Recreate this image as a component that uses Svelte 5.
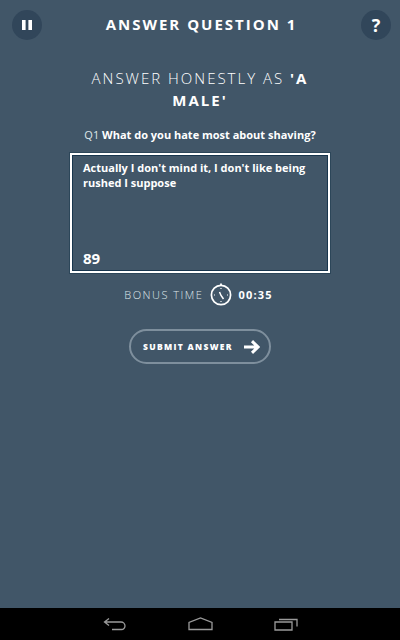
<script>
  let answer = "Actually I don't mind it, I don't like being rushed I suppose";
  let remaining = 89;
</script>

<div class="screen">
  <main>
    <header>
      <button class="round" aria-label="Pause">
        <svg width="10" height="12" viewBox="0 0 10 12"><path d="M0 1h3.6v10H0zM6.4 1H10v10H6.4z" fill="#fff" /></svg>
      </button>
      <h1>ANSWER QUESTION 1</h1>
      <button class="round help">?</button>
    </header>

    <h2>ANSWER HONESTLY AS <b>'A MALE'</b></h2>

    <p class="question">Q1 <b>What do you hate most about shaving?</b></p>

    <div class="answer">
      <div class="text">{answer}</div>
      <div class="count">{remaining}</div>
    </div>

    <div class="bonus">
      <span class="label">BONUS TIME</span>
      <svg width="22" height="24" viewBox="0 0 22 24" fill="none" stroke="#fff">
        <path d="M11 1.500v2" stroke-width="1.800" />
        <circle cx="11" cy="13" r="9.600" stroke-width="1.700" />
        <path d="M11 6v1M11 19v1M4 13h1M17 13h1" stroke-width="1.200" />
        <path d="M9.500 10L11 13.500l2.500 3.500" stroke-width="1.500" />
      </svg>
      <b>00:35</b>
    </div>

    <button class="submit">
      <span>SUBMIT ANSWER</span>
      <svg width="16" height="14" viewBox="0 0 16 14" fill="none" stroke="#fff" stroke-width="3">
        <path d="M0 7h13M8 1.200L14 7l-6 5.800" />
      </svg>
    </button>
  </main>

  <nav>
    <svg width="24" height="14" viewBox="0 0 24 14" fill="none" stroke="#9a9a9a" stroke-width="1.300">
      <path d="M6 1.500L1.500 5 6 8.500M1.500 5H18a4 4 0 0 1 4 4v0a3.500 3.500 0 0 1-3.500 3.500H9" />
    </svg>
    <svg width="25" height="14" viewBox="0 0 25 14" fill="none" stroke="#9a9a9a" stroke-width="1.300">
      <path d="M1 12.500V5.500L12.500 1 24 5.500v7z" />
    </svg>
    <svg width="24" height="14" viewBox="0 0 24 14" fill="none" stroke="#9a9a9a" stroke-width="1.300">
      <path d="M1 5h17v8H1zM5 2.500h18v7" />
    </svg>
  </nav>
</div>

<style>
  :global(body) {
    margin: 0;
  }

  .screen {
    width: 400px;
    height: 640px;
    display: flex;
    flex-direction: column;
    background: #415668;
    color: #fff;
    font-family: "Open Sans", sans-serif;
  }

  main {
    flex: 1;
    display: flex;
    flex-direction: column;
    align-items: center;
  }

  header {
    width: 100%;
    box-sizing: border-box;
    padding: 10px 9px 0 12px;
    display: flex;
    align-items: center;
    justify-content: space-between;
  }

  .round {
    width: 30px;
    height: 30px;
    border: 0;
    padding: 0;
    border-radius: 50%;
    background: #31465a;
    color: #fff;
    display: flex;
    align-items: center;
    justify-content: center;
    font-family: inherit;
  }

  .help {
    font-size: 18px;
    font-weight: 700;
  }

  h1 {
    margin: 0 0 2px;
    font-size: 15px;
    line-height: 28px;
    font-weight: 700;
    letter-spacing: 2px;
  }

  h2 {
    width: 240px;
    margin: 27px 0 0;
    text-align: center;
    font-size: 15px;
    line-height: 22px;
    font-weight: 300;
    letter-spacing: 2px;
  }

  h2 b {
    font-weight: 700;
  }

  .question {
    margin: 16px 0 0;
    font-size: 11px;
    line-height: 16px;
    color: #dfe6ea;
  }

  .question b {
    color: #fff;
    font-weight: 700;
  }

  .answer {
    width: 260px;
    height: 120px;
    margin-top: 10px;
    box-sizing: border-box;
    border: 2px solid #fff;
    box-shadow: 0 0 0 1px #2c4659, inset 0 0 0 1px #17354d;
    padding: 5px 11px 3px;
    display: flex;
    flex-direction: column;
    justify-content: space-between;
  }

  .text {
    font-size: 11px;
    line-height: 15px;
    font-weight: 700;
  }

  .count {
    font-size: 15px;
    line-height: 20px;
    font-weight: 700;
  }

  .bonus {
    margin-top: 7px;
    padding-right: 3px;
    display: flex;
    align-items: center;
    gap: 6px;
    height: 28px;
  }

  .label {
    font-size: 11px;
    font-weight: 300;
    letter-spacing: 1.500px;
    color: #dfe6ea;
    margin-right: 1px;
  }

  .bonus b {
    font-size: 11px;
    letter-spacing: 1.200px;
  }

  .submit {
    margin-top: 21px;
    width: 142px;
    height: 35px;
    padding: 0 9px 0 12px;
    box-sizing: border-box;
    border: 2px solid #7e8f9d;
    border-radius: 18px;
    background: none;
    color: #fff;
    font-family: inherit;
    display: flex;
    align-items: center;
    justify-content: space-between;
  }

  .submit span {
    font-size: 8.500px;
    font-weight: 800;
    letter-spacing: 1.300px;
  }

  nav {
    height: 32px;
    background: #000;
    display: flex;
    justify-content: center;
    align-items: center;
    gap: 61px;
  }
</style>
